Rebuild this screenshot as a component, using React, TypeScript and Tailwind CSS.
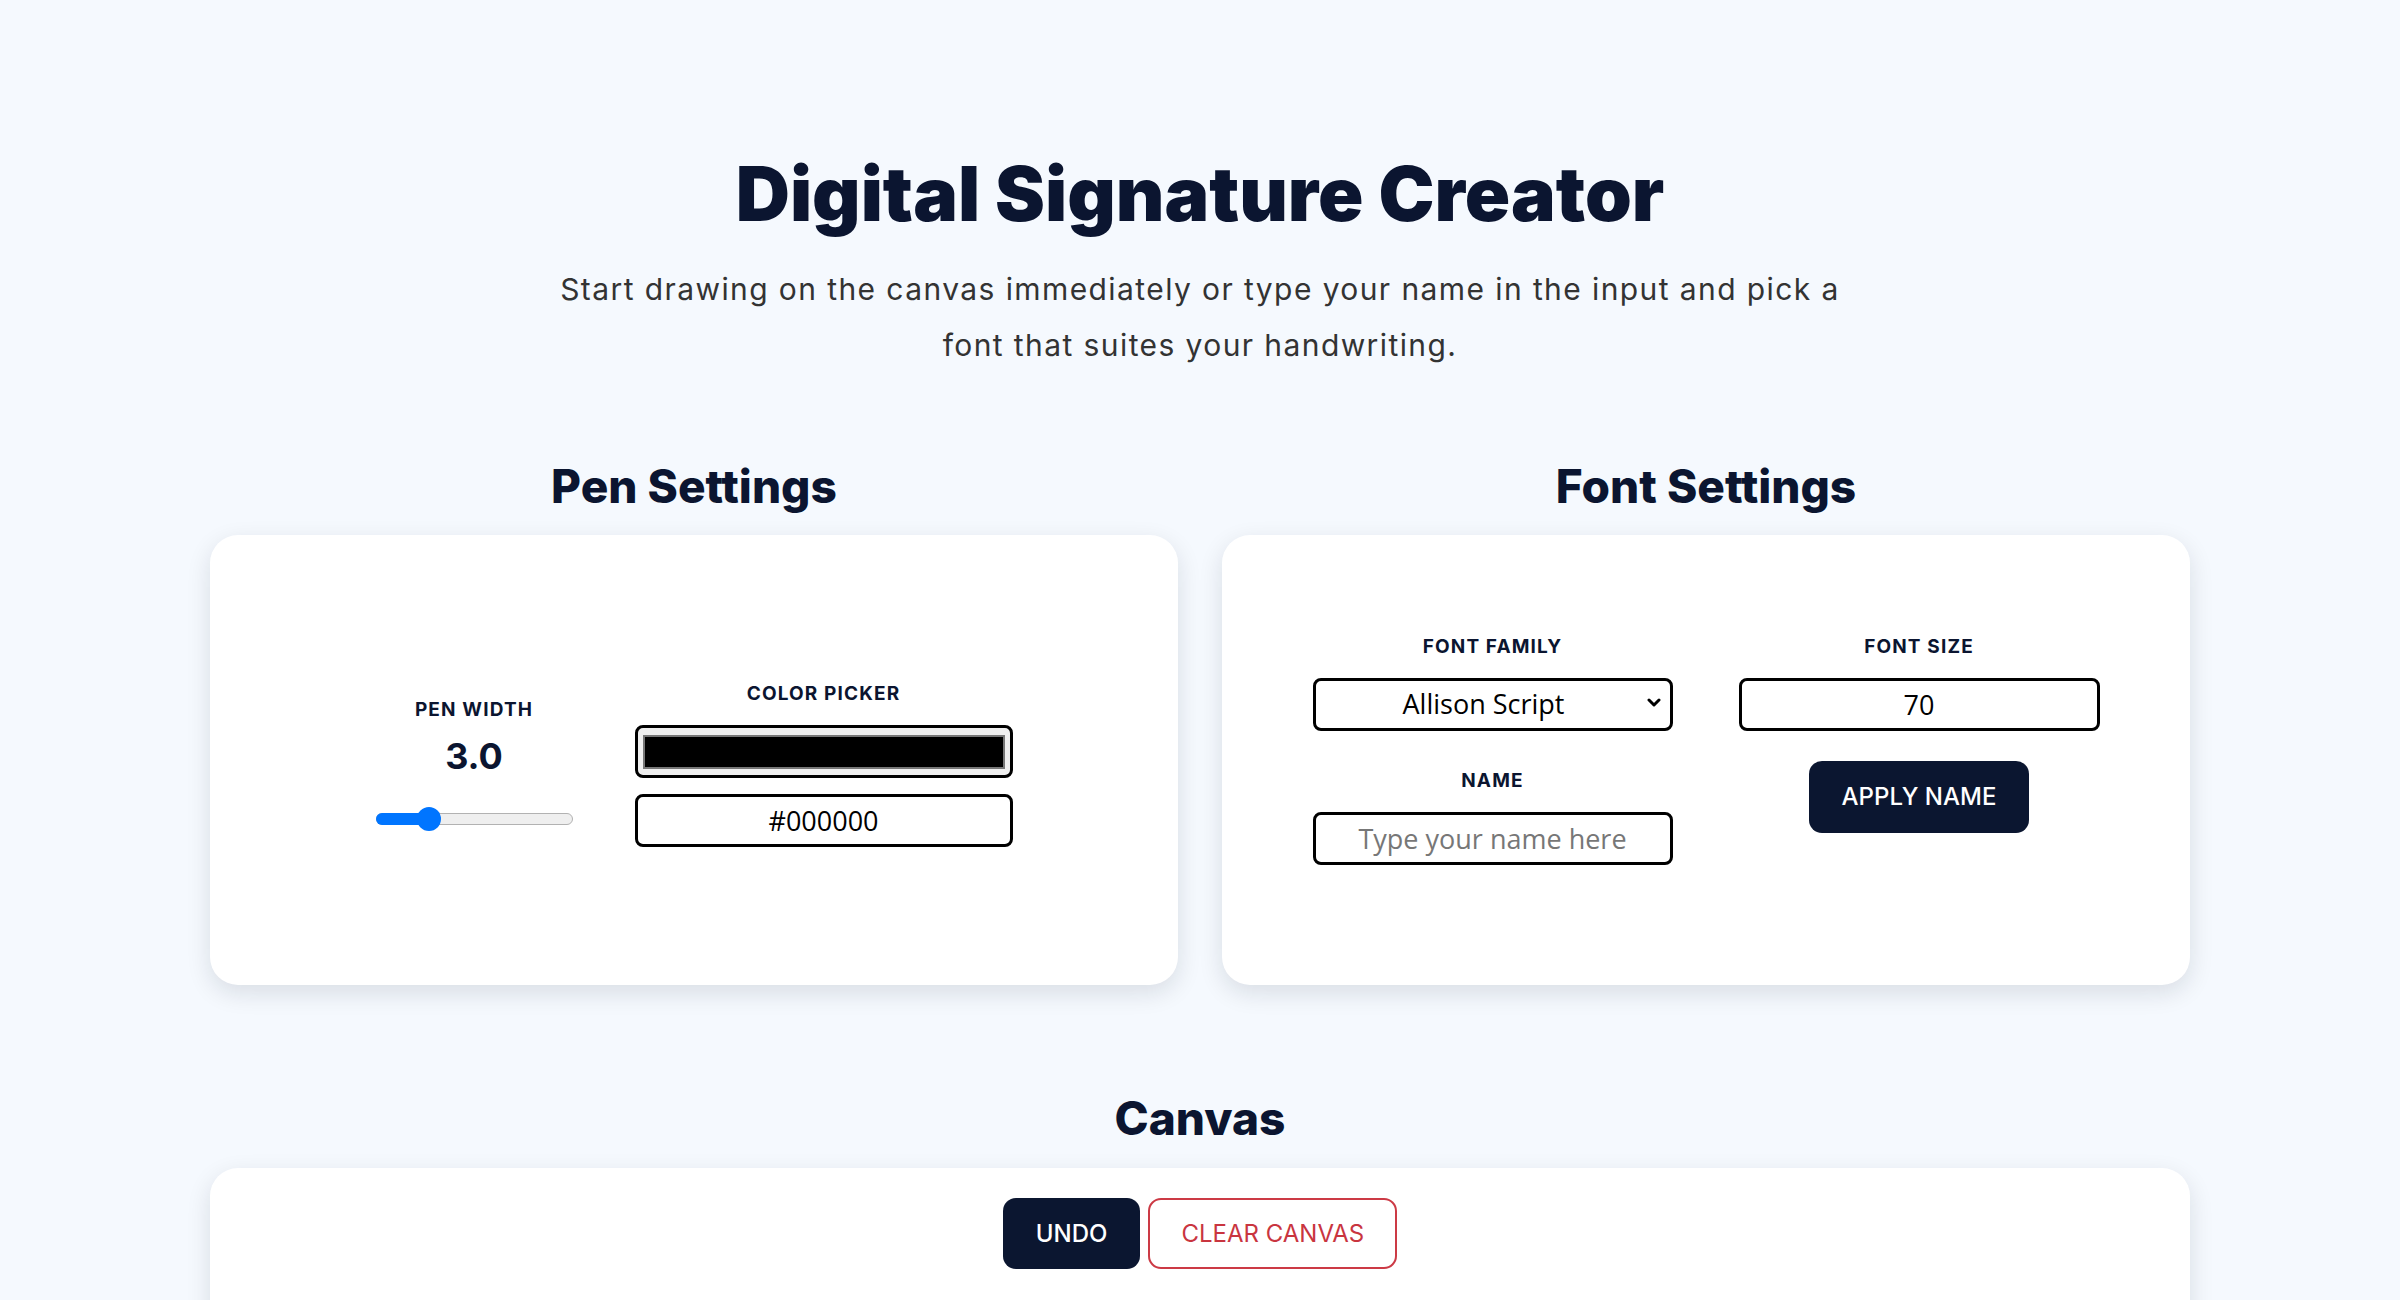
import React from 'react';

const label = "text-[19px] font-bold uppercase tracking-[0.06em] text-[#0b1530] leading-[22px]";
const field = "h-[53px] w-full rounded-[8px] border-[3px] border-black bg-white text-center text-[27px] text-black font-['Open_Sans',sans-serif]";

const PenSettings = () => (
  <div className="flex h-full items-center justify-center gap-[62px]">
    <div className="flex w-[197px] flex-col items-center pt-[3px]">
      <span className={label}>Pen Width</span>
      <span className="mt-[13px] text-[36px] font-bold leading-[44px] text-[#0b1530]">3.0</span>
      <div className="relative mt-[35px] h-[12px] w-[197px] rounded-full border border-[#b2b2b2] bg-[#efefef]">
        <div className="absolute -left-px -top-px h-[12px] w-[54px] rounded-full bg-[#0075ff]" />
        <div className="absolute left-[40px] top-[-7px] h-[24px] w-[24px] rounded-full bg-[#0075ff]" />
      </div>
    </div>
    <div className="flex w-[378px] flex-col items-center pt-[10px]">
      <span className={label}>Color Picker</span>
      <div className="mt-[20px] flex h-[53px] w-full items-center rounded-[8px] border-[3px] border-black bg-[#efefef] px-[5px]">
        <div className="h-[34px] w-full border-2 border-[#777] bg-black" />
      </div>
      <input readOnly value="#000000" className={`mt-[16px] ${field}`} />
    </div>
  </div>
);

const FontSettings = () => (
  <div className="flex h-full items-center justify-center pb-[20px]">
    <div className="grid grid-cols-[360px_361px] gap-x-[66px]">
      <div className="flex flex-col items-center">
        <span className={label}>Font Family</span>
        <div className={`relative mt-[20px] flex items-center justify-center ${field}`}>
          <span className="pr-[18px]">Allison Script</span>
          <svg className="absolute right-[9px] top-[17px]" width="14" height="10" viewBox="0 0 14 10" fill="none">
            <path d="M2 2l5 5 5-5" stroke="black" strokeWidth="3" strokeLinecap="round" strokeLinejoin="round" />
          </svg>
        </div>
        <span className={`mt-[39px] ${label}`}>Name</span>
        <input readOnly placeholder="Type your name here" className={`mt-[20px] placeholder:text-[#777] ${field}`} />
      </div>
      <div className="flex flex-col items-center">
        <span className={label}>Font Size</span>
        <input readOnly value="70" className={`mt-[20px] ${field}`} />
        <button className="mt-[30px] h-[72px] rounded-[13px] bg-[#0b1630] px-[33px] text-[24px] font-medium text-white">
          APPLY NAME
        </button>
      </div>
    </div>
  </div>
);

export default function App() {
  return (
    <div className="min-h-screen bg-[#f5f9fe] pt-[156px] font-['Inter',sans-serif] text-[#0b1530]">
      <header className="text-center">
        <h1 className="text-[75px] font-black leading-none">Digital Signature Creator</h1>
        <p className="mx-auto mt-[30px] max-w-[1320px] text-[30px] leading-[56px] tracking-[0.047em] text-[#333]">
          Start drawing on the canvas immediately or type your name in the input and pick a font that suites your handwriting.
        </p>
      </header>

      <main className="mx-auto mt-[90px] max-w-[1980px]">
        <div className="grid grid-cols-2 gap-[44px]">
          <section className="flex flex-col items-center">
            <h2 className="text-[46px] font-extrabold leading-none">Pen Settings</h2>
            <div className="mt-[26px] h-[450px] w-full rounded-[28px] bg-white shadow-[0_8px_24px_rgba(15,23,42,0.12)]">
              <PenSettings />
            </div>
          </section>
          <section className="flex flex-col items-center">
            <h2 className="text-[46px] font-extrabold leading-none">Font Settings</h2>
            <div className="mt-[26px] h-[450px] w-full rounded-[28px] bg-white shadow-[0_8px_24px_rgba(15,23,42,0.12)]">
              <FontSettings />
            </div>
          </section>
        </div>

        <section className="mt-[110px] flex flex-col items-center">
          <h2 className="text-[46px] font-extrabold leading-none">Canvas</h2>
          <div className="mt-[27px] h-[500px] w-full rounded-[28px] bg-white pt-[30px] shadow-[0_8px_24px_rgba(15,23,42,0.12)]">
            <div className="flex justify-center gap-[8px]">
              <button className="h-[71px] rounded-[13px] bg-[#0b1630] px-[33px] text-[24px] font-medium text-white">UNDO</button>
              <button className="h-[71px] rounded-[13px] border-2 border-[#cc3a45] bg-white px-[31px] text-[24px] font-normal text-[#c9353f]">
                CLEAR CANVAS
              </button>
            </div>
          </div>
        </section>
      </main>
    </div>
  );
}
